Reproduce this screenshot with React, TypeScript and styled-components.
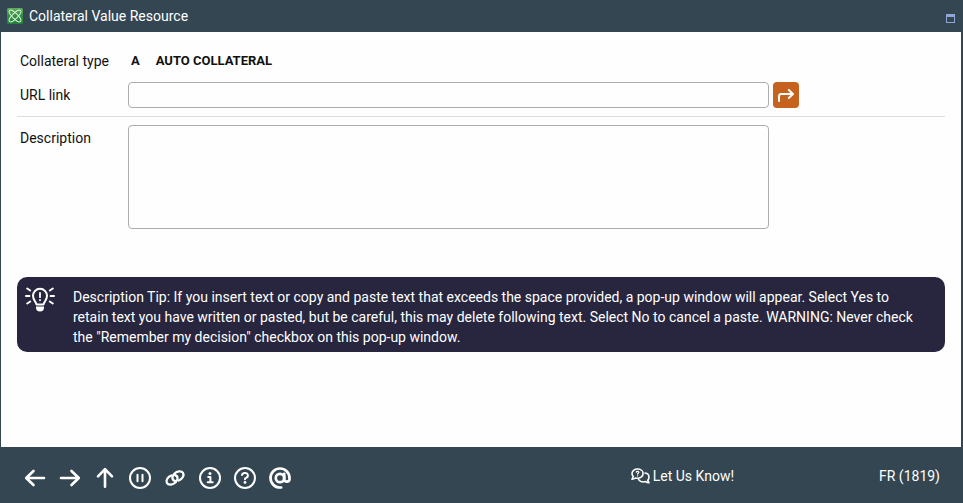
import React from 'react';
import styled, { createGlobalStyle } from 'styled-components';

const GlobalStyle = createGlobalStyle`
  *, *::before, *::after { box-sizing: border-box; }
  body { margin: 0; }
  body, button, input, textarea { font-family: Roboto, "Liberation Sans", sans-serif; font-size: 14px; }
`;

const Window = styled.div`
  display: flex;
  flex-direction: column;
  min-height: 100vh;
  background: #344651;
  color: #111;
  line-height: 20px;
`;

const TitleBar = styled.header`
  display: flex;
  align-items: center;
  height: 32px;
  padding: 0 8px 0 7px;
  color: #fff;
`;

const Title = styled.h1`
  flex: 1;
  margin: 0 0 0 6px;
  font-size: 14px;
  font-weight: 400;
`;

const IconButton = styled.button<{ $size: number }>`
  display: flex;
  align-items: center;
  justify-content: center;
  flex: none;
  width: ${(p) => p.$size}px;
  height: ${(p) => p.$size}px;
  padding: 0;
  border: 0;
  background: none;
  color: #fff;
  cursor: pointer;
`;

const MaximizeButton = styled(IconButton)`
  margin-top: 5px;
`;

const GoButton = styled(IconButton)`
  border-radius: 4px;
  background: #c5621d;
`;

const Content = styled.main`
  flex: 1;
  margin: 0 2px 0 1px;
  padding: 16px;
  background: #fefefe;
`;

const Row = styled.div<{ $top?: boolean }>`
  display: grid;
  grid-template-columns: 107px minmax(0, 641px) 26px;
  column-gap: 4px;
  align-items: ${(p) => (p.$top ? 'start' : 'center')};
  min-height: 26px;
  margin-bottom: 8px;
`;

const Caption = styled.label`
  padding: 3px 0 3px 3px;
`;

const Value = styled.output`
  display: flex;
  gap: 16px;
  padding-left: 3px;
  font-size: 13px;
  font-weight: 700;
`;

const TextBox = styled.input`
  width: 100%;
  height: 26px;
  padding: 0 6px;
  border: 1px solid #adadad;
  border-radius: 4px;
  background: #fefefe;
`;

const TextArea = styled.textarea`
  display: block;
  width: 100%;
  height: 104px;
  padding: 4px 6px;
  border: 1px solid #adadad;
  border-radius: 4px;
  background: #fefefe;
  resize: none;
`;

const Divider = styled.hr`
  height: 1px;
  margin: 0 0 8px;
  border: 0;
  background: #dcdcdc;
`;

const Tip = styled.aside`
  display: flex;
  gap: 18px;
  margin-top: 48px;
  padding: 10px 24px 5px 8px;
  border-radius: 10px;
  background: #27263e;
  color: #fff;
`;

const TipText = styled.p`
  margin: 0;
`;

const Footer = styled.footer`
  display: flex;
  align-items: center;
  height: 56px;
  padding: 2px 23px 0 24px;
`;

const Tools = styled.nav`
  display: flex;
  gap: 13px;
  margin-top: 4px;
`;

const FooterLink = styled.a`
  display: flex;
  align-items: center;
  gap: 3px;
  margin: 0 145px 0 auto;
  color: #fff;
  text-decoration: none;
`;

const ScreenCode = styled.span`
  color: #fff;
`;

const Glyph = styled.svg`
  display: block;
  flex: none;
  fill: none;
  stroke: currentColor;
  stroke-width: 2;
  stroke-linecap: round;
  stroke-linejoin: round;
`;

const Logo = () => (
  <Glyph width="16" height="16" viewBox="0 0 16 16" aria-hidden="true">
    <defs>
      <linearGradient id="logoGreen" x1="0" y1="0" x2="0" y2="1">
        <stop offset="0" stopColor="#5fae5f" />
        <stop offset="0.5" stopColor="#2f9140" />
        <stop offset="1" stopColor="#1f8136" />
      </linearGradient>
    </defs>
    <rect width="16" height="16" rx="1.5" fill="url(#logoGreen)" stroke="none" />
    <g stroke="#e6f3e6" strokeWidth="1">
      <ellipse cx="8" cy="8" rx="7.8" ry="2.6" transform="rotate(45 8 8)" />
      <ellipse cx="8" cy="8" rx="7.8" ry="2.6" transform="rotate(-45 8 8)" />
    </g>
  </Glyph>
);

const Bulb = () => (
  <Glyph width="30" height="26" viewBox="0 0 30 26" aria-hidden="true">
    <path d="M11.5 17.5C11 14.8 8 13.2 8 8.8a7 7 0 0 1 14 0c0 4.4-3 6-3.5 8.7z" />
    <path d="M15 5.8v4.4M15 13v.3" strokeWidth="1.8" />
    <path d="M11 19.5h8v1a4 4 0 0 1-8 0z" fill="currentColor" stroke="none" />
    <path d="M1 9h3.4M25.6 9H29M2.2 1.5l3 2M27.8 1.5l-3 2M2.2 16.5l3-2M27.8 16.5l-3-2" />
  </Glyph>
);

const tools = [
  { name: 'Back', art: <path d="M20 11H2.5M9.500 4L2.200 11l7.300 7" strokeWidth="2.6" /> },
  { name: 'Forward', art: <path d="M2 11h17.500M12.500 4l7.300 7-7.300 7" strokeWidth="2.6" /> },
  { name: 'Up', art: <path d="M11 19.800V2.500M4 9.300L11 2.200l7 7.100" strokeWidth="2.6" /> },
  {
    name: 'Pause',
    art: (
      <>
        <circle cx="11" cy="11" r="10" />
        <path d="M8.500 7.800v6.400M13.500 7.800v6.400" />
      </>
    ),
  },
  {
    name: 'Link',
    art: (
      <g transform="rotate(-32 11 11)" strokeWidth="2.3">
        <path d="M9.100 6.900A6 4.200 0 1 0 12.500 8.600" />
        <path d="M12.900 15.100A6 4.200 0 1 0 9.500 13.400" />
      </g>
    ),
  },
  {
    name: 'Information',
    art: (
      <>
        <circle cx="11" cy="11" r="10" />
        <path d="M9.200 10h2.200v5.200M8.700 15.300h5" />
        <circle cx="11" cy="6.6" r="1.5" fill="currentColor" stroke="none" />
      </>
    ),
  },
  {
    name: 'Help',
    art: (
      <>
        <circle cx="11" cy="11" r="10" />
        <path d="M8 8c.3-1.300 1.300-2 2.600-2h.9a2.400 2.400 0 0 1 1.200 4.500L11 11.600v.6" />
        <circle cx="11" cy="15.4" r="1.4" fill="currentColor" stroke="none" />
      </>
    ),
  },
  {
    name: 'Email',
    art: (
      <g strokeWidth="2.7">
        <circle cx="11" cy="11" r="4.2" />
        <path d="M15.200 6.800v5.600a2.700 2.700 0 0 0 5.300 0V11A9.500 9.500 0 1 0 11 20.500h1.200" />
      </g>
    ),
  },
];

export default function App() {
  return (
    <Window>
      <GlobalStyle />
      <TitleBar>
        <Logo />
        <Title>Collateral Value Resource</Title>
        <MaximizeButton type="button" $size={9} aria-label="Maximize">
          <Glyph width="9" height="9" viewBox="0 0 9 9" aria-hidden="true">
            <path d="M0 0h9v9H0zM1 3v5h7V3z" fill="#8fa6d8" fillRule="evenodd" stroke="none" />
          </Glyph>
        </MaximizeButton>
      </TitleBar>

      <Content>
        <Row>
          <Caption htmlFor="type">Collateral type</Caption>
          <Value id="type">
            <span>A</span>
            <span>AUTO COLLATERAL</span>
          </Value>
        </Row>
        <Row>
          <Caption htmlFor="url">URL link</Caption>
          <TextBox id="url" type="text" />
          <GoButton type="button" $size={26} aria-label="Open link">
            <Glyph width="18" height="18" viewBox="0 0 18 18" aria-hidden="true">
              <path d="M2 15v-4.600Q2 8 4.400 8H16M11.800 4L16 8l-4.200 4" />
            </Glyph>
          </GoButton>
        </Row>
        <Divider />
        <Row $top>
          <Caption htmlFor="description">Description</Caption>
          <TextArea id="description" />
        </Row>
        <Tip>
          <Bulb />
          <TipText>
            Description Tip: If you insert text or copy and paste text that exceeds the space provided, a pop-up
            window will appear. Select Yes to retain text you have written or pasted, but be careful, this may delete
            following text. Select No to cancel a paste. WARNING: Never check the "Remember my decision" checkbox on
            this pop-up window.
          </TipText>
        </Tip>
      </Content>

      <Footer>
        <Tools aria-label="Screen tools">
          {tools.map((tool) => (
            <IconButton key={tool.name} type="button" $size={22} aria-label={tool.name}>
              <Glyph width="22" height="22" viewBox="0 0 22 22" aria-hidden="true">
                {tool.art}
              </Glyph>
            </IconButton>
          ))}
        </Tools>
        <FooterLink href="#feedback">
          <Glyph width="19" height="16" viewBox="0 0 19 16" aria-hidden="true">
            <g strokeWidth="1.6">
              <path d="M6.500 1C3.400 1 1 3 1 5.500c0 1.200.5 2.200 1.300 3L1 11.200c1.500 0 2.600-.5 3.400-1.200.7.200 1.400.2 2.100.2 3.100 0 5.600-2.100 5.600-4.700S9.600 1 6.500 1z" />
              <path d="M14 5c2.400.3 4 2 4 4.200 0 1.200-.5 2.200-1.300 3L18 14.800c-1.500 0-2.600-.5-3.400-1.200-3 .8-5.800-.2-7-2" />
              <path d="M5.300 4.200c.3-1.200 2.700-1 2.500.3-.1.700-1.200.7-1.200 1.500M6.600 7.800v.1" strokeWidth="1.3" />
            </g>
          </Glyph>
          Let Us Know!
        </FooterLink>
        <ScreenCode>FR (1819)</ScreenCode>
      </Footer>
    </Window>
  );
}
